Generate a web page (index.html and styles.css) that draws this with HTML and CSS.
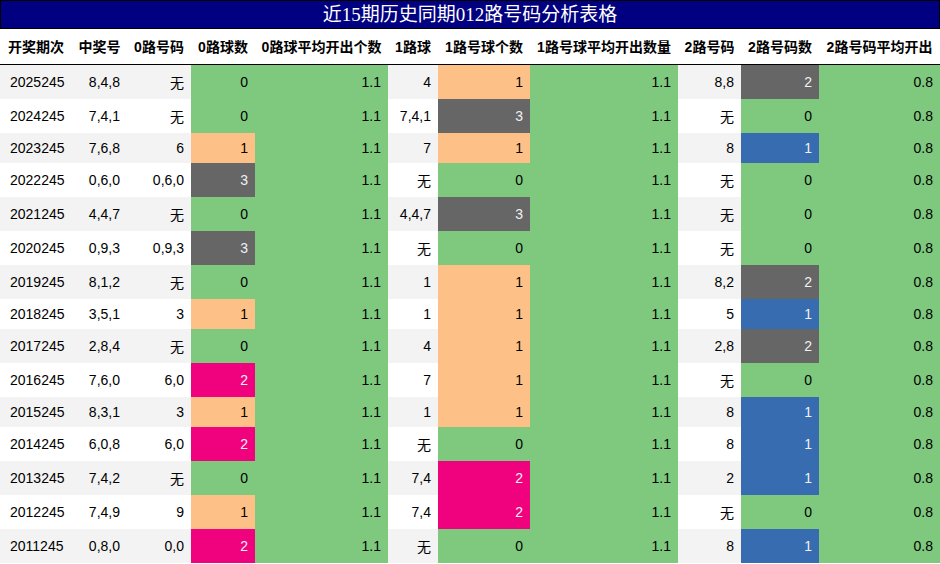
FILE: index.html
```html
<!DOCTYPE html>
<html lang="zh">
<head>
<meta charset="utf-8">
<title>近15期历史同期012路号码分析表格</title>
<link rel="stylesheet" href="styles.css">
</head>
<body>
<div class="sheet">
  <div class="title">近15期历史同期012路号码分析表格</div>
  <table class="grid">
    <colgroup>
      <col class="c1"><col class="c2"><col class="c3"><col class="c4"><col class="c5"><col class="c6"><col class="c7"><col class="c8"><col class="c9"><col class="c10"><col class="c11">
    </colgroup>
    <thead>
      <tr>
        <th>开奖期次</th><th>中奖号</th><th>0路号码</th><th>0路球数</th><th>0路球平均开出个数</th><th>1路球</th><th>1路号球个数</th><th>1路号球平均开出数量</th><th>2路号码</th><th>2路号码数</th><th>2路号码平均开出</th>
      </tr>
    </thead>
    <tbody>
      <tr><td class="idx">2025245</td><td>8,4,8</td><td>无</td><td class="g">0</td><td class="g">1.1</td><td>4</td><td class="o">1</td><td class="g">1.1</td><td>8,8</td><td class="d">2</td><td class="g">0.8</td></tr>
      <tr><td class="idx">2024245</td><td>7,4,1</td><td>无</td><td class="g">0</td><td class="g">1.1</td><td>7,4,1</td><td class="d">3</td><td class="g">1.1</td><td>无</td><td class="g">0</td><td class="g">0.8</td></tr>
      <tr><td class="idx">2023245</td><td>7,6,8</td><td>6</td><td class="o">1</td><td class="g">1.1</td><td>7</td><td class="o">1</td><td class="g">1.1</td><td>8</td><td class="b">1</td><td class="g">0.8</td></tr>
      <tr><td class="idx">2022245</td><td>0,6,0</td><td>0,6,0</td><td class="d">3</td><td class="g">1.1</td><td>无</td><td class="g">0</td><td class="g">1.1</td><td>无</td><td class="g">0</td><td class="g">0.8</td></tr>
      <tr><td class="idx">2021245</td><td>4,4,7</td><td>无</td><td class="g">0</td><td class="g">1.1</td><td>4,4,7</td><td class="d">3</td><td class="g">1.1</td><td>无</td><td class="g">0</td><td class="g">0.8</td></tr>
      <tr><td class="idx">2020245</td><td>0,9,3</td><td>0,9,3</td><td class="d">3</td><td class="g">1.1</td><td>无</td><td class="g">0</td><td class="g">1.1</td><td>无</td><td class="g">0</td><td class="g">0.8</td></tr>
      <tr><td class="idx">2019245</td><td>8,1,2</td><td>无</td><td class="g">0</td><td class="g">1.1</td><td>1</td><td class="o">1</td><td class="g">1.1</td><td>8,2</td><td class="d">2</td><td class="g">0.8</td></tr>
      <tr><td class="idx">2018245</td><td>3,5,1</td><td>3</td><td class="o">1</td><td class="g">1.1</td><td>1</td><td class="o">1</td><td class="g">1.1</td><td>5</td><td class="b">1</td><td class="g">0.8</td></tr>
      <tr><td class="idx">2017245</td><td>2,8,4</td><td>无</td><td class="g">0</td><td class="g">1.1</td><td>4</td><td class="o">1</td><td class="g">1.1</td><td>2,8</td><td class="d">2</td><td class="g">0.8</td></tr>
      <tr><td class="idx">2016245</td><td>7,6,0</td><td>6,0</td><td class="p">2</td><td class="g">1.1</td><td>7</td><td class="o">1</td><td class="g">1.1</td><td>无</td><td class="g">0</td><td class="g">0.8</td></tr>
      <tr><td class="idx">2015245</td><td>8,3,1</td><td>3</td><td class="o">1</td><td class="g">1.1</td><td>1</td><td class="o">1</td><td class="g">1.1</td><td>8</td><td class="b">1</td><td class="g">0.8</td></tr>
      <tr><td class="idx">2014245</td><td>6,0,8</td><td>6,0</td><td class="p">2</td><td class="g">1.1</td><td>无</td><td class="g">0</td><td class="g">1.1</td><td>8</td><td class="b">1</td><td class="g">0.8</td></tr>
      <tr><td class="idx">2013245</td><td>7,4,2</td><td>无</td><td class="g">0</td><td class="g">1.1</td><td>7,4</td><td class="p">2</td><td class="g">1.1</td><td>2</td><td class="b">1</td><td class="g">0.8</td></tr>
      <tr><td class="idx">2012245</td><td>7,4,9</td><td>9</td><td class="o">1</td><td class="g">1.1</td><td>7,4</td><td class="p">2</td><td class="g">1.1</td><td>无</td><td class="g">0</td><td class="g">0.8</td></tr>
      <tr><td class="idx">2011245</td><td>0,8,0</td><td>0,0</td><td class="p">2</td><td class="g">1.1</td><td>无</td><td class="g">0</td><td class="g">1.1</td><td>8</td><td class="b">1</td><td class="g">0.8</td></tr>
    </tbody>
  </table>
</div>
</body>
</html>
```

FILE: styles.css
```css
html, body {
  margin: 0;
  padding: 0;
  background: #ffffff;
}

.sheet {
  width: 940px;
}

.title {
  height: 27px;
  line-height: 27px;
  border: 1px solid #000000;
  background: #000080;
  color: #ffffff;
  text-align: center;
  font-family: "Liberation Serif", "Noto Sans CJK SC", serif;
  font-size: 19px;
}

.grid {
  width: 940px;
  table-layout: fixed;
  border-collapse: collapse;
  font-family: "Liberation Sans", "Noto Sans CJK SC", sans-serif;
  font-size: 14px;
  color: #000000;
}

.c1 { width: 72px; }
.c2 { width: 55px; }
.c3 { width: 64px; }
.c4 { width: 64px; }
.c5 { width: 133px; }
.c6 { width: 50px; }
.c7 { width: 92px; }
.c8 { width: 148px; }
.c9 { width: 63px; }
.c10 { width: 78px; }
.c11 { width: 121px; }

.grid th {
  font-weight: bold;
  text-align: center;
  padding: 7px 0 8px;
  border-bottom: 1px solid #000000;
  white-space: nowrap;
}

.grid td {
  text-align: right;
  padding: 7px 7px;
  white-space: nowrap;
}

.grid td.idx {
  text-align: left;
  padding-left: 10px;
}

.grid tbody tr:nth-child(odd) {
  background: #f3f3f3;
}

.grid tbody tr:nth-child(even) {
  background: #ffffff;
}

.grid td.g { background: #7fc97f; }
.grid td.o { background: #fdc086; }
.grid td.d { background: #666666; color: #f1f1f1; }
.grid td.b { background: #386cb0; color: #f1f1f1; }
.grid td.p { background: #f0027f; color: #f1f1f1; }
```
